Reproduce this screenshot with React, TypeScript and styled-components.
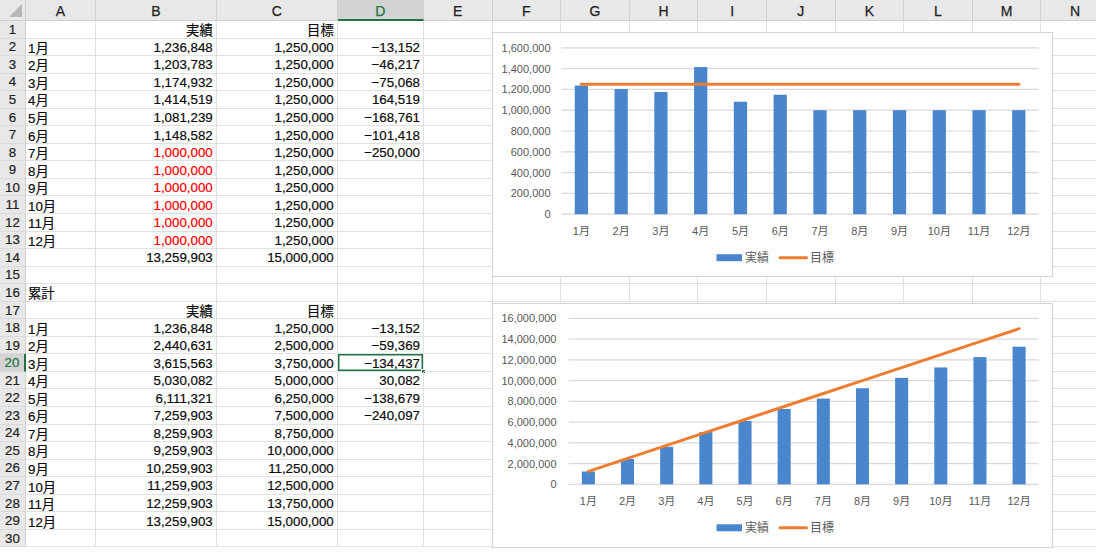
import React from "react";
import styled, { createGlobalStyle, css } from "styled-components";

const GlobalStyle = createGlobalStyle`
  html, body { margin: 0; padding: 0; background: #ffffff; overflow: hidden; }
  * { box-sizing: border-box; }
`;

const COLS = ["A", "B", "C", "D", "E", "F", "G", "H", "I", "J", "K", "L", "M", "N"];
const ROW_H = 17.55;
const GRID = "#E1E1E1";
const GREEN = "#217346";

const Sheet = styled.div`
  position: relative;
  width: 1110px;
  height: 552px;
  overflow: hidden;
  display: grid;
  grid-template-columns: 26px 70px 120.7px 121px 86.3px repeat(10, 68.6px);
  grid-template-rows: 21px repeat(30, ${ROW_H}px);
  font-family: "Liberation Sans", "Noto Sans CJK JP", sans-serif;
  font-size: 13.3px;
  color: #0a0a0a;
`;

const Corner = styled.div`
  position: relative;
  background: #e8e8e8;
  border-right: 1px solid #cfcfcf;
  border-bottom: 1px solid #cfcfcf;
  &::after {
    content: "";
    position: absolute;
    right: 3px;
    bottom: 3px;
    width: 0;
    height: 0;
    border-left: 13px solid transparent;
    border-bottom: 13px solid #b8b8b8;
  }
`;

const ColHeader = styled.div<{ $selected?: boolean }>`
  display: flex;
  align-items: center;
  justify-content: center;
  background: #e8e8e8;
  border-right: 1px solid #d0d0d0;
  border-bottom: 1px solid #cfcfcf;
  font-size: 14px;
  color: #222;
  -webkit-text-stroke: 0.25px currentColor;
  padding-top: 2px;
  ${(p) =>
    p.$selected &&
    css`
      background: #d3d3d3;
      color: ${GREEN};
      border-bottom: 2px solid ${GREEN};
    `}
`;

const RowHeader = styled.div<{ $selected?: boolean }>`
  display: flex;
  align-items: center;
  justify-content: center;
  background: #e8e8e8;
  border-right: 1px solid #cfcfcf;
  border-bottom: 1px solid #dadada;
  font-size: 13.3px;
  color: #222;
  -webkit-text-stroke: 0.2px currentColor;
  ${(p) =>
    p.$selected &&
    css`
      background: #d3d3d3;
      color: ${GREEN};
      border-right: 2px solid ${GREEN};
    `}
`;

const Cell = styled.div<{ $align?: "left" | "right"; $red?: boolean; $active?: boolean }>`
  position: relative;
  display: flex;
  align-items: center;
  justify-content: ${(p) => (p.$align === "right" ? "flex-end" : "flex-start")};
  padding: 1px ${(p) => (p.$align === "right" ? "3px" : "2px")} 0 2px;
  border-right: 1px solid ${GRID};
  border-bottom: 1px solid ${GRID};
  white-space: nowrap;
  -webkit-text-stroke: 0.2px currentColor;
  color: ${(p) => (p.$red ? "#ff0000" : "#0a0a0a")};
  ${(p) =>
    p.$active &&
    css`
      box-shadow: inset 0 0 0 1.5px ${GREEN};
    `}
`;

const FillHandle = styled.span`
  position: absolute;
  right: -3px;
  bottom: -3px;
  width: 5px;
  height: 5px;
  background: ${GREEN};
  border: 1px solid #ffffff;
`;

const ChartFrame = styled.div<{ $top: number; $height: number }>`
  position: absolute;
  left: 492px;
  top: ${(p) => p.$top}px;
  width: 561px;
  height: ${(p) => p.$height}px;
  background: #ffffff;
  border: 1px solid #d4d4d4;
`;

const ChartSvg = styled.svg`
  display: block;
  font-family: "Liberation Sans", "Noto Sans CJK JP", sans-serif;
`;

const fmt = (n: number) => n.toLocaleString("en-US");
const fmtSigned = (n: number) => (n < 0 ? "\u2212" + fmt(-n) : fmt(n));

const monthly = [1236848, 1203783, 1174932, 1414519, 1081239, 1148582, 1000000, 1000000, 1000000, 1000000, 1000000, 1000000];
const target = 1250000;
const cum: number[] = [];
monthly.reduce((acc, v, i) => {
  cum[i] = acc + v;
  return acc + v;
}, 0);
const cumTarget = monthly.map((_, i) => target * (i + 1));
const months = monthly.map((_, i) => `${i + 1}月`);

type CellData = { text: string; align?: "left" | "right"; red?: boolean };
const rows: Record<number, Record<string, CellData>> = {};
const setCell = (r: number, c: string, d: CellData) => {
  rows[r] = rows[r] || {};
  rows[r][c] = d;
};

setCell(1, "B", { text: "実績", align: "right" });
setCell(1, "C", { text: "目標", align: "right" });
monthly.forEach((v, i) => {
  const r = i + 2;
  setCell(r, "A", { text: months[i] });
  setCell(r, "B", { text: fmt(v), align: "right", red: i >= 6 });
  setCell(r, "C", { text: fmt(target), align: "right" });
  if (i < 7) setCell(r, "D", { text: fmtSigned(v - target), align: "right" });
});
setCell(14, "B", { text: fmt(cum[11]), align: "right" });
setCell(14, "C", { text: fmt(target * 12), align: "right" });
setCell(16, "A", { text: "累計" });
setCell(17, "B", { text: "実績", align: "right" });
setCell(17, "C", { text: "目標", align: "right" });
cum.forEach((v, i) => {
  const r = i + 18;
  setCell(r, "A", { text: months[i] });
  setCell(r, "B", { text: fmt(v), align: "right" });
  setCell(r, "C", { text: fmt(cumTarget[i]), align: "right" });
  if (i < 6) setCell(r, "D", { text: fmtSigned(v - cumTarget[i]), align: "right" });
});

type ChartProps = {
  values: number[];
  targets: number[];
  step: number;
  plotLeft: number;
  labelRight: number;
  plotTop: number;
  plotBottom: number;
  height: number;
};

function Chart({ values, targets, step, plotLeft, labelRight, plotTop, plotBottom, height }: ChartProps) {
  const plotRight = 545.7;
  const max = step * 8;
  const catW = (plotRight - plotLeft) / 12;
  const barW = catW / 3;
  const yOf = (v: number) => plotBottom - (v / max) * (plotBottom - plotTop);
  const cx = (i: number) => plotLeft + catW * (i + 0.5);
  const linePts = targets.map((t, i) => `${cx(i)},${yOf(t)}`).join(" ");
  const legendY = plotBottom + 43.5;
  return (
    <ChartSvg width={559} height={height - 2} viewBox={`0 0 559 ${height - 2}`}>
      {Array.from({ length: 9 }).map((_, i) => {
        const y = yOf(i * step);
        return (
          <g key={i}>
            <line x1={plotLeft} x2={plotRight} y1={y} y2={y} stroke="#d9d9d9" strokeWidth={1.2} />
            <text x={labelRight} y={y} dy="0.36em" textAnchor="end" fontSize={11} fill="#595959">
              {fmt(i * step)}
            </text>
          </g>
        );
      })}
      {values.map((v, i) => (
        <rect key={i} x={cx(i) - barW / 2} y={yOf(v)} width={barW} height={plotBottom - yOf(v)} fill="#4A86CE" />
      ))}
      <polyline points={linePts} fill="none" stroke="#ED7D31" strokeWidth={3} strokeLinecap="round" strokeLinejoin="round" />
      {months.map((m, i) => (
        <text key={m} x={cx(i)} y={plotBottom + 16.5} dy="0.36em" textAnchor="middle" fontSize={11} fill="#595959">
          {m}
        </text>
      ))}
      <rect x={223.5} y={legendY - 3.5} width={25.5} height={7} fill="#4A86CE" />
      <text x={252} y={legendY} dy="0.36em" fontSize={12} fill="#595959">
        実績
      </text>
      <line x1={287} x2={313.5} y1={legendY} y2={legendY} stroke="#ED7D31" strokeWidth={3} strokeLinecap="round" />
      <text x={317} y={legendY} dy="0.36em" fontSize={12} fill="#595959">
        目標
      </text>
    </ChartSvg>
  );
}

export default function App() {
  const cells: React.ReactNode[] = [];
  cells.push(<Corner key="corner" />);
  COLS.forEach((c) => {
    cells.push(
      <ColHeader key={`h-${c}`} $selected={c === "D"}>
        {c}
      </ColHeader>
    );
  });
  for (let r = 1; r <= 30; r++) {
    cells.push(
      <RowHeader key={`r-${r}`} $selected={r === 20}>
        {r}
      </RowHeader>
    );
    COLS.forEach((c) => {
      const d = rows[r]?.[c];
      const active = r === 20 && c === "D";
      const text = active ? fmtSigned(cum[2] - cumTarget[2]) : d?.text;
      cells.push(
        <Cell key={`${c}${r}`} $align={active ? "right" : d?.align} $red={d?.red} $active={active}>
          {text}
          {active && <FillHandle />}
        </Cell>
      );
    });
  }
  return (
    <>
      <GlobalStyle />
      <Sheet>
        {cells}
        <ChartFrame $top={32} $height={245}>
          <Chart
            values={monthly}
            targets={monthly.map(() => target)}
            step={200000}
            plotLeft={68.5}
            labelRight={57.5}
            plotTop={14.8}
            plotBottom={181.2}
            height={245}
          />
        </ChartFrame>
        <ChartFrame $top={302.5} $height={245}>
          <Chart
            values={cum}
            targets={cumTarget}
            step={2000000}
            plotLeft={75.8}
            labelRight={63.5}
            plotTop={14.3}
            plotBottom={180.3}
            height={245}
          />
        </ChartFrame>
      </Sheet>
    </>
  );
}
